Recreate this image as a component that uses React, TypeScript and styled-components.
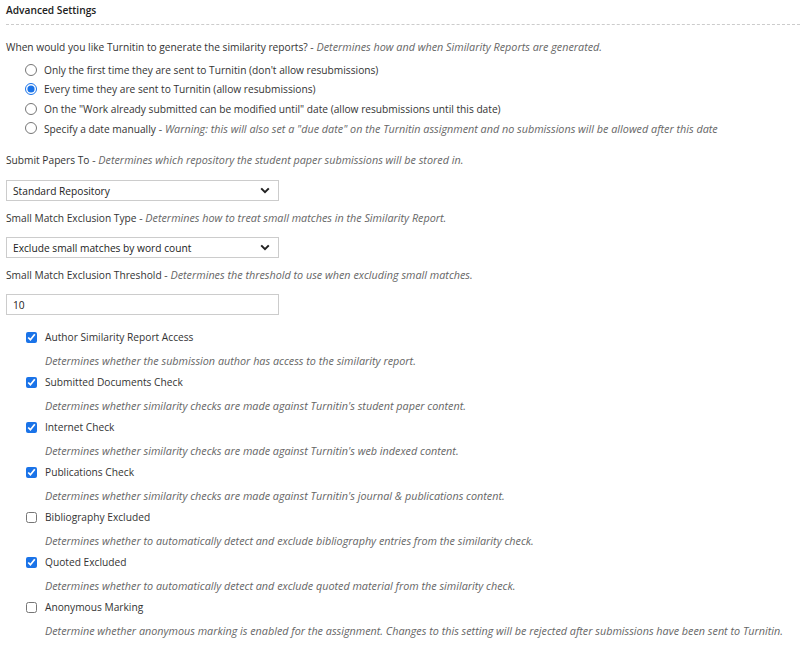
import React from 'react';
import styled, { createGlobalStyle } from 'styled-components';

const GlobalStyle = createGlobalStyle`
  body {
    margin: 0;
    background: #fff;
    font-family: 'Open Sans', 'Noto Sans', sans-serif;
    font-size: 10.2px;
    color: #333;
  }
`;

const radios = [
  { label: "Only the first time they are sent to Turnitin (don't allow resubmissions)" },
  { label: 'Every time they are sent to Turnitin (allow resubmissions)', checked: true },
  { label: 'On the "Work already submitted can be modified until" date (allow resubmissions until this date)' },
  {
    label: 'Specify a date manually',
    note: 'Warning: this will also set a "due date" on the Turnitin assignment and no submissions will be allowed after this date',
  },
];

const checks = [
  { label: 'Author Similarity Report Access', on: true, desc: 'Determines whether the submission author has access to the similarity report.' },
  { label: 'Submitted Documents Check', on: true, desc: "Determines whether similarity checks are made against Turnitin's student paper content." },
  { label: 'Internet Check', on: true, desc: "Determines whether similarity checks are made against Turnitin's web indexed content." },
  { label: 'Publications Check', on: true, desc: "Determines whether similarity checks are made against Turnitin's journal & publications content." },
  { label: 'Bibliography Excluded', on: false, desc: 'Determines whether to automatically detect and exclude bibliography entries from the similarity check.' },
  { label: 'Quoted Excluded', on: true, desc: 'Determines whether to automatically detect and exclude quoted material from the similarity check.' },
  { label: 'Anonymous Marking', on: false, desc: 'Determine whether anonymous marking is enabled for the assignment. Changes to this setting will be rejected after submissions have been sent to Turnitin.' },
];

function Chevron() {
  return (
    <svg width="10" height="7" viewBox="0 0 10 7">
      <path d="M1.2 1.4 L5 5.2 L8.8 1.4" fill="none" stroke="#222" strokeWidth="2" />
    </svg>
  );
}

function App() {
  return (
    <Page>
      <GlobalStyle />
      <Heading>Advanced Settings</Heading>

      <Label $top={14}>
        When would you like Turnitin to generate the similarity reports?{' '}
        <Hint>- Determines how and when Similarity Reports are generated.</Hint>
      </Label>
      <RadioList>
        {radios.map((r) => (
          <RadioRow key={r.label}>
            <input type="radio" name="generate" defaultChecked={!!r.checked} />
            <span>
              {r.label}
              {r.note && <Hint> - {r.note}</Hint>}
            </span>
          </RadioRow>
        ))}
      </RadioList>

      <Label $top={14}>
        Submit Papers To <Hint>- Determines which repository the student paper submissions will be stored in.</Hint>
      </Label>
      <Select $top={12}>
        <span>Standard Repository</span>
        <Chevron />
      </Select>

      <Label $top={9}>
        Small Match Exclusion Type <Hint>- Determines how to treat small matches in the Similarity Report.</Hint>
      </Label>
      <Select $top={11}>
        <span>Exclude small matches by word count</span>
        <Chevron />
      </Select>

      <Label $top={9}>
        Small Match Exclusion Threshold <Hint>- Determines the threshold to use when excluding small matches.</Hint>
      </Label>
      <TextField $top={11} defaultValue="10" />

      <CheckList>
        {checks.map((c) => (
          <CheckGroup key={c.label}>
            <CheckRow>
              <input type="checkbox" defaultChecked={c.on} />
              <span>{c.label}</span>
            </CheckRow>
            <Desc>{c.desc}</Desc>
          </CheckGroup>
        ))}
      </CheckList>
    </Page>
  );
}

const Page = styled.div`
  padding: 0 0 0 6px;
`;

const Heading = styled.div`
  font-weight: 600;
  line-height: 20px;
  padding-bottom: 4px;
  border-bottom: 1px dashed #ccc;
  color: #222;
`;

const Label = styled.div<{ $top: number }>`
  margin-top: ${(p) => p.$top}px;
  line-height: 16px;
  white-space: nowrap;
`;

const Hint = styled.i`
  font-size: 10.8px;
  color: #666;
`;

const RadioList = styled.div`
  margin-top: 5px;
  padding-left: 19px;
`;

const RadioRow = styled.label`
  display: flex;
  align-items: center;
  gap: 7px;
  height: 19.5px;
  white-space: nowrap;

  input {
    margin: 0;
    width: 12px;
    height: 12px;
    accent-color: #1a73e8;
  }
`;

const Select = styled.div<{ $top: number }>`
  margin-top: ${(p) => p.$top}px;
  box-sizing: border-box;
  width: 273px;
  height: 21px;
  border: 1px solid #ccc;
  display: flex;
  align-items: center;
  justify-content: space-between;
  padding: 0 8px 0 6px;
  color: #222;
`;

const TextField = styled.input<{ $top: number }>`
  display: block;
  margin-top: ${(p) => p.$top}px;
  box-sizing: border-box;
  width: 273px;
  height: 21px;
  border: 1px solid #ccc;
  padding: 0 6px;
  font: inherit;
  color: #222;
  outline: none;
`;

const CheckList = styled.div`
  margin-top: 13px;
  padding-left: 20px;
`;

const CheckGroup = styled.div`
  height: 45px;
`;

const CheckRow = styled.label`
  display: flex;
  align-items: center;
  gap: 8px;
  height: 18px;

  input {
    margin: 0;
    width: 11px;
    height: 11px;
    accent-color: #1a73e8;
  }
`;

const Desc = styled.div`
  margin-top: 7px;
  padding-left: 19px;
  line-height: 16px;
  font-size: 10.8px;
  font-style: italic;
  color: #666;
  white-space: nowrap;
`;

export default App;
